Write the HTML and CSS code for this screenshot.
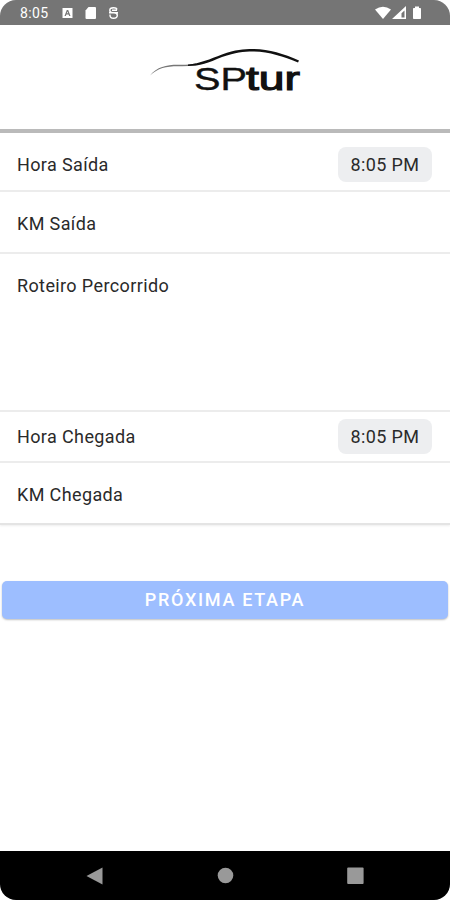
FILE: index.html
```html
<!DOCTYPE html>
<html lang="pt-BR">
<head>
  <meta charset="UTF-8">
  <meta name="viewport" content="width=device-width, initial-scale=1">
  <title>SPtur</title>
  <link rel="stylesheet" href="styles.css">
</head>
<body>
  <div class="phone">

    <!-- Status bar -->
    <div class="status-bar">
      <span class="clock">8:05</span>
      <svg class="status-icons" width="58" height="14" viewBox="0 0 58 14">
        <path fill="#fff" fill-rule="evenodd" d="M1.500 2h10v10h-10zM3.500 10h1.300l.6-1.500h2.200l.6 1.500h1.300L7.200 4H5.800zM5.800 7.300L6.500 5.500l.7 1.800z"/>
        <path fill="#fff" d="M27.500 1H34q1 0 1 1v10q0 1-1 1h-8.500q-1 0-1-1V4.500z"/>
        <path fill="none" stroke="#fff" stroke-width="1.400" d="M56 3.500Q55.500 1.700 52.500 1.700Q48.800 1.700 48.800 4.200Q48.800 6.700 51.500 6.700H53Q56.300 6.700 56.300 9.300Q56.300 12.300 52.500 12.300Q49 12.300 49 9.300V8.500M48 6.700h9M51 4.200h5"/>
      </svg>
      <svg class="signal-icons" width="50" height="14" viewBox="0 0 50 14">
        <path fill="#fff" d="M1 3.500Q9-2 17 3.500L9 13z"/>
        <path fill="#fff" fill-rule="evenodd" d="M32 0v13H18zM30.500 4.500L27.500 7.300v4.300h3z"/>
        <path fill="#fff" d="M41 .5h4V2h1.200q.8 0 .8.800v9.400q0 .8-.8.800h-6.400q-.8 0-.8-.8V2.800q0-.8.8-.8H41z"/>
      </svg>
    </div>

    <header class="header">
      <svg class="logo" width="170" height="64" viewBox="-8 0 170 64">
        <path fill="#777" d="M2 29.500C9 21 18 18.800 30 18.800C38 19 43 18.500 48 17.500V19.300C42 20.300 36 20.300 30 20.200C18 20.200 10 22 2 29.500z"/>
        <path fill="#111" d="M40 18.600C52 17.500 62 13 74 8.500C88 3.500 95 3 105 3C121 3 135 7.500 151 14.500L150 16.500C135 10.500 121 5.800 105 5.600C95 5.600 88 6.500 74 11C60 17 52 20 40 20z"/>
        <text class="logo-sp" x="46" y="43.800" textLength="53" lengthAdjust="spacingAndGlyphs">SP</text>
        <text class="logo-tur" x="98" y="43.800" textLength="54" lengthAdjust="spacingAndGlyphs">tur</text>
      </svg>
    </header>

    <main class="content">
      <div class="item item-time">
        <span class="label">Hora Saída</span>
        <button class="time-button">8:05 PM</button>
      </div>
      <div class="item item-input">
        <span class="label">KM Saída</span>
      </div>
      <div class="item item-textarea">
        <span class="label">Roteiro Percorrido</span>
      </div>
      <div class="item item-time arrival">
        <span class="label">Hora Chegada</span>
        <button class="time-button">8:05 PM</button>
      </div>
      <div class="item item-input last">
        <span class="label">KM Chegada</span>
      </div>

      <button class="next-button">PRÓXIMA ETAPA</button>
    </main>

    <!-- Android navigation -->
    <nav class="nav-bar">
      <svg width="18" height="18" viewBox="0 0 18 18"><path fill="#999" d="M.5 9L16.500 .5v17z"/></svg>
      <svg width="18" height="18" viewBox="0 0 18 18"><circle cx="9.500" cy="8.500" r="7.800" fill="#999"/></svg>
      <svg width="18" height="18" viewBox="0 0 18 18"><rect x="1.200" y=".5" width="16.400" height="16.400" rx="1" fill="#999"/></svg>
    </nav>
  </div>
</body>
</html>
```
FILE: styles.css
```css
* {
  box-sizing: border-box;
}

body {
  margin: 0;
  background: #fff;
  font-family: Roboto, sans-serif;
  color: #2a2a2a;
}

.phone {
  width: 450px;
  height: 900px;
  display: flex;
  flex-direction: column;
  border-radius: 16px;
  overflow: hidden;
  background: #fff;
}

/* Status bar */
.status-bar {
  height: 25px;
  padding: 1px 26px 0 20px;
  display: flex;
  align-items: center;
  background: #757575;
}

.clock {
  width: 41px;
  font-size: 14px;
  letter-spacing: 0.4px;
  color: #fff;
}

.signal-icons {
  margin-left: auto;
}

/* Header */
.header {
  height: 108px;
  padding-top: 21px;
  text-align: center;
  border-bottom: 4px solid #bababa;
}

.logo-sp,
.logo-tur {
  font-family: "Liberation Sans", sans-serif;
  font-size: 32px;
  fill: #111;
  stroke: #111;
  stroke-width: 0.4px;
}

.logo-tur {
  font-size: 34px;
  stroke-width: 1.2px;
}

/* Form items */
.content {
  flex: 1;
  display: flex;
  flex-direction: column;
}

.item {
  display: flex;
  padding: 0 18px 0 17px;
  border-bottom: 2px solid #ececec;
}

.label {
  font-size: 18px;
  line-height: 22px;
  letter-spacing: 0.38px;
}

.item-time {
  height: 59px;
  padding-top: 6px;
  align-items: center;
  justify-content: space-between;
}

.item-time .label {
  padding-top: 1px;
}

.item-time.arrival {
  height: 51px;
  padding-top: 0;
}

.item-input {
  height: 62px;
  padding-top: 4px;
  align-items: center;
}

.item-textarea {
  height: 158px;
  padding-top: 21px;
}

.item.last {
  padding-top: 3px;
  border-bottom-color: #e4e4e4;
  box-shadow: 0 1px 2px #eee;
}

.time-button {
  width: 94px;
  height: 35px;
  padding: 0;
  border: none;
  border-radius: 8px;
  background: #edeef0;
  color: #2a2a2a;
  font-family: inherit;
  font-size: 18px;
  letter-spacing: 0.38px;
}

.next-button {
  height: 38px;
  margin: 56px 2px 0;
  padding: 0 0 2px;
  border: none;
  border-radius: 5px;
  background: #9dbeff;
  box-shadow: 0 1px 2px rgba(0, 0, 0, 0.25);
  color: #fff;
  font-family: inherit;
  font-size: 18px;
  font-weight: 500;
  letter-spacing: 1.7px;
}

/* Navigation bar */
.nav-bar {
  height: 49px;
  padding: 0 86px;
  display: flex;
  align-items: center;
  justify-content: space-between;
  background: #000;
}
```
